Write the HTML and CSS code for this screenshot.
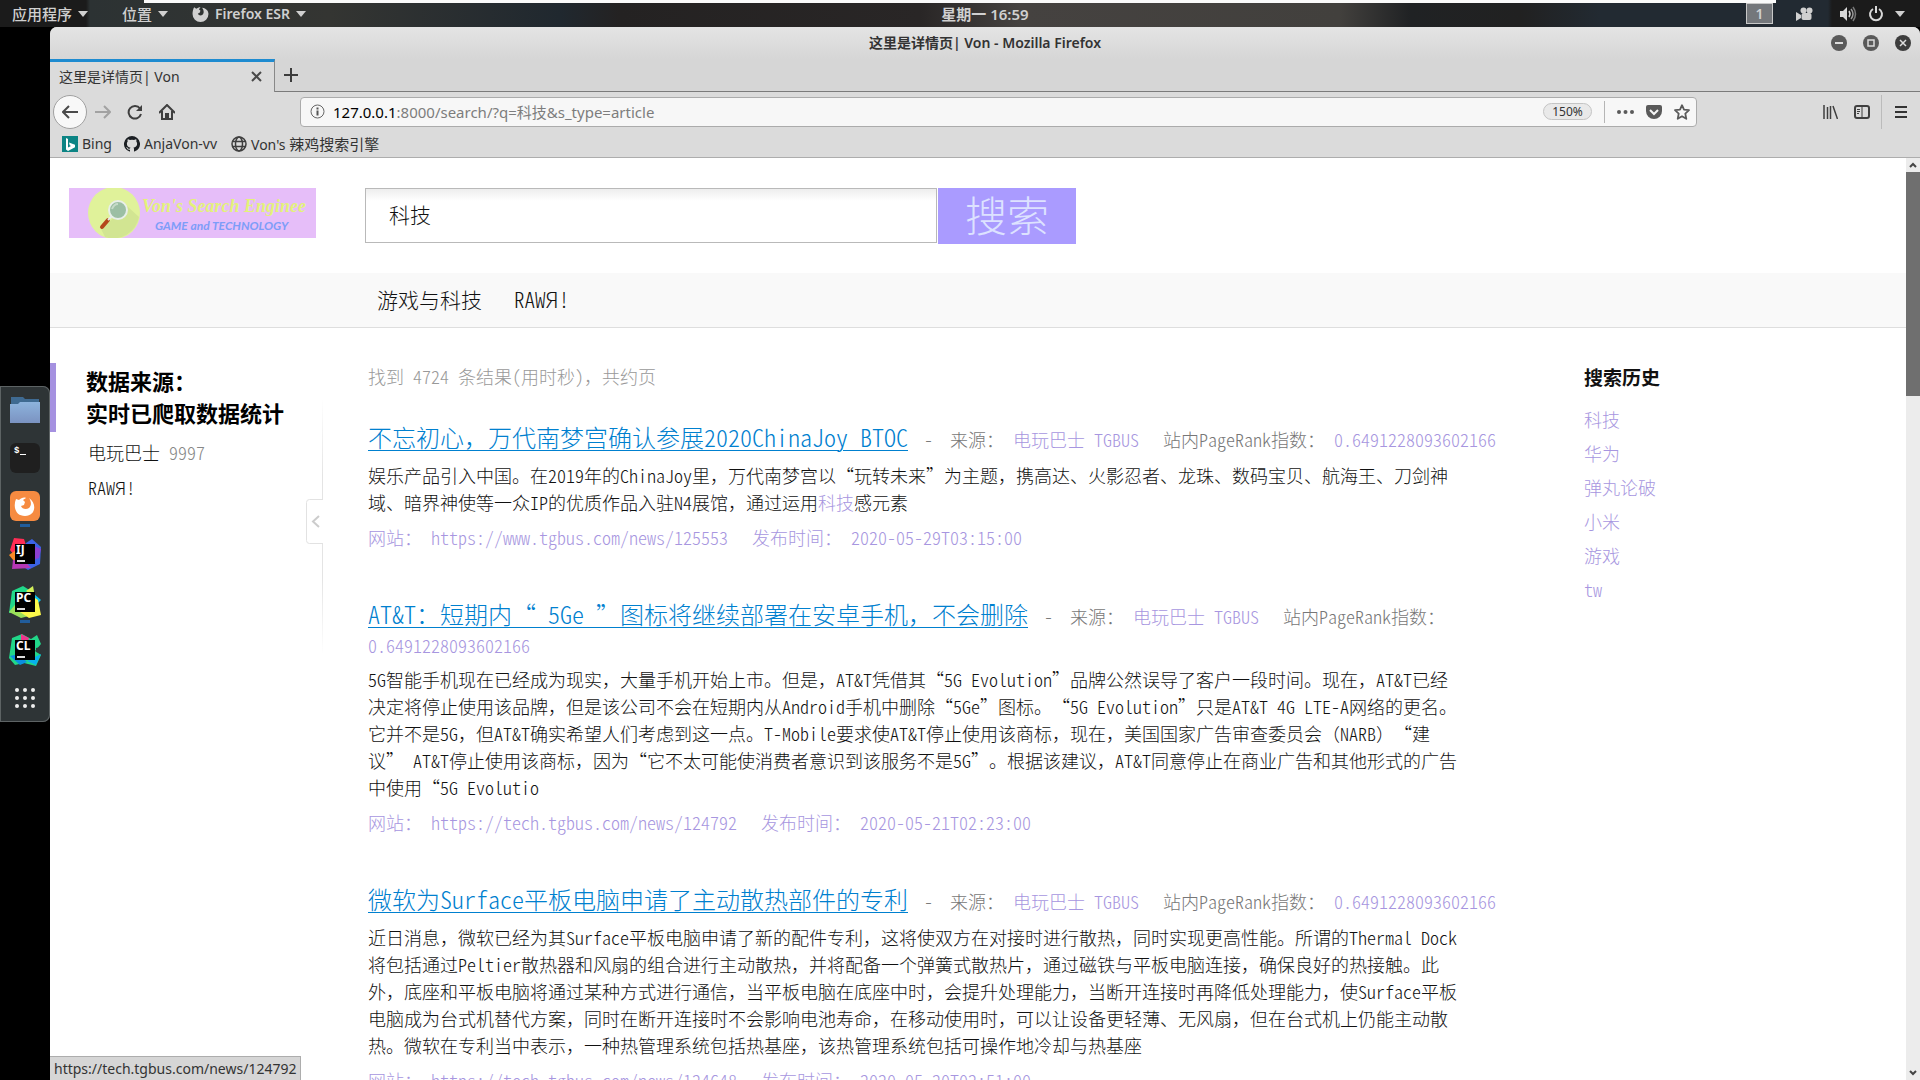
FILE: index.html
```html
<!DOCTYPE html>
<html lang="zh-CN">
<head>
    <meta charset="UTF-8">
    <meta name="viewport" content="width=device-width, initial-scale=1.0">
    <title>这里是详情页| Von</title>
    <link rel="stylesheet" href="styles.css">
</head>
<body>
    <!-- 顶部面板 -->
    <header class="panel">
        <div class="panel-left">
            <button class="menu menu-app">应用程序<i class="caret"></i></button>
            <button class="menu menu-place">位置<i class="caret"></i></button>
            <button class="menu menu-firefox">
                <svg width="17" height="17" viewBox="0 0 16 16"><path fill="#d0d0d0" d="M2 2l2 1.500c1-1 2.500-1.500 4-1.500L6.500 4 8 5.500 7 7.500 5.500 8c.5 2 4 2.500 5 .5 1-2 .5-4-1-6 4 .5 6 3 6 6a7.500 7.500 0 0 1-15 0C.5 6 1 4 2 2z"/></svg>
                Firefox ESR<i class="caret"></i>
            </button>
        </div>
        <div class="clock">星期一 16:59</div>
        <div class="panel-right">
            <span class="workspace">1</span>
            <svg class="camera" width="17" height="14" viewBox="0 0 17 14"><g fill="#d0d0d0"><circle cx="7.500" cy="3.500" r="3"/><circle cx="13.500" cy="3.500" r="3"/><rect x="5.500" y="6" width="10" height="7" rx="2"/><path d="M0 5l5 3v3l-5 3z"/></g></svg>
            <svg class="volume" width="17" height="16" viewBox="0 0 17 16"><path fill="#d8d8d8" d="M0 5h3l4-4v14l-4-4H0z"/><g fill="none" stroke-width="1.500"><path stroke="#d8d8d8" d="M9 5q2 3 0 6"/><path stroke="#999" d="M11 3q4 5 0 10"/><path stroke="#777" d="M13 1q5 7 0 14"/></g></svg>
            <svg width="16" height="16" viewBox="0 0 16 16"><path fill="none" stroke="#d8d8d8" stroke-width="2" d="M5 3a6 6 0 1 0 6 0M8 0v7"/></svg>
            <i class="caret"></i>
        </div>
    </header>

    <div class="desktop">
        <!-- 左侧程序栏 -->
        <nav class="dock">
            <div class="dock-box">
                <span class="dock-item">
                    <svg width="30" height="26" viewBox="0 0 30 26"><path fill="#3f6a91" d="M1 0h12l2 2h14v8H1z"/><path fill="url(#fold)" d="M0 7h8l2-2h20v21H0z"/><defs><linearGradient id="fold" x2="0" y2="1"><stop stop-color="#8db3dd"/><stop offset="1" stop-color="#7b93c1"/></linearGradient></defs></svg>
                </span>
                <span class="dock-item">
                    <svg width="30" height="30" viewBox="0 0 30 30"><rect width="30" height="30" rx="6" fill="#1f1f1f"/><text class="term" x="4" y="10">$</text><path stroke="#fff" d="M10 11.500h6"/></svg>
                </span>
                <span class="dock-item running">
                    <svg width="30" height="30" viewBox="0 0 30 30"><rect width="30" height="30" rx="6" fill="#f68b41"/><path fill="#fff" d="M6 8l3 1c2-2 5-3 7-2l-3 2 2 2-1 3-3 1c1 3 5 4 8 2 3-3 2-7 0-10 8 5 7 18-4 18C5 25 3 15 6 8z"/></svg>
                </span>
                <span class="dock-item">
                    <svg width="32" height="32" viewBox="0 0 32 32"><path fill="#ff2d55" d="M5 0l10 1 4 12-11 8-7-9z"/><path fill="#f98a26" d="M0 17l7-5 5 8-7 3z"/><path fill="#3b63e6" d="M17 5l6-4 9 8-1 17-12 6-9-6z"/><path fill="#8b3fd0" d="M25 8l7 3-2 9-6 2z"/><path fill="#b537b5" d="M4 22l12 1 6 7-19 1z"/><rect x="6" y="6" width="20" height="20"/><text class="ide" x="7" y="16">IJ</text><path stroke="#ddd" stroke-width="2" d="M8 23h8"/></svg>
                </span>
                <span class="dock-item running">
                    <svg width="32" height="32" viewBox="0 0 32 32"><path fill="#21d789" d="M3 5l11-5 8 5-6 22-16 0z"/><path fill="#9be05a" d="M0 26l10-12 10 16-8 2z"/><path fill="#d3f05a" d="M17 5l7-5 2 11z"/><path fill="#07c3f2" d="M25 8l7 6-6 6z"/><path fill="#fcf84a" d="M26 12l3 2 3 15-12 3-9-6z"/><rect x="6" y="6" width="20" height="20"/><text class="ide" x="7" y="16">PC</text><path stroke="#ddd" stroke-width="2" d="M8 23h8"/></svg>
                </span>
                <span class="dock-item">
                    <svg width="32" height="32" viewBox="0 0 32 32"><path fill="#21d789" d="M3 4l10-4 9 5 6-4 4 9-6 7 6 4-5 11-12-3-9 2-6-7z"/><path fill="#ed358c" d="M12 0l8 4-2 6-6-2z"/><path fill="#0a8fe0" d="M1 22l9-2 8 8-7 3z"/><path fill="#07b0ee" d="M18 27l14-7-5 11z"/><path fill="#2e3436" d="M27 14l5-1v6l-5-1z"/><rect x="6" y="6" width="20" height="20"/><text class="ide" x="7" y="16">CL</text><path stroke="#ddd" stroke-width="2" d="M8 23h8"/></svg>
                </span>
                <span class="dock-item">
                    <svg width="20" height="20" viewBox="0 0 20 20"><g fill="#eee"><circle cx="2" cy="2" r="2"/><circle cx="10" cy="2" r="2"/><circle cx="18" cy="2" r="2"/><circle cx="2" cy="10" r="2"/><circle cx="10" cy="10" r="2"/><circle cx="18" cy="10" r="2"/><circle cx="2" cy="18" r="2"/><circle cx="10" cy="18" r="2"/><circle cx="18" cy="18" r="2"/></g></svg>
                </span>
            </div>
        </nav>

        <!-- 浏览器窗口 -->
        <div class="window">
            <div class="titlebar">
                <div class="window-title">这里是详情页| Von - Mozilla Firefox</div>
                <div class="window-btns">
                    <button aria-label="最小化"><svg width="16" height="16" viewBox="0 0 16 16"><circle cx="8" cy="8" r="8" fill="#5a5a5a"/><path stroke="#ddd" stroke-width="2" d="M4 8h8"/></svg></button>
                    <button aria-label="最大化"><svg width="16" height="16" viewBox="0 0 16 16"><circle cx="8" cy="8" r="8" fill="#5a5a5a"/><rect x="5" y="5" width="6" height="6" fill="none" stroke="#ddd" stroke-width="1.500"/></svg></button>
                    <button aria-label="关闭"><svg width="16" height="16" viewBox="0 0 16 16"><circle cx="8" cy="8" r="8" fill="#3d3d3d"/><path stroke="#ddd" stroke-width="1.500" d="M5 5l6 6M11 5l-6 6"/></svg></button>
                </div>
            </div>
            <div class="tabs">
                <div class="tab">
                    <span>这里是详情页| Von</span>
                    <button aria-label="关闭标签页"><svg width="11" height="11" viewBox="0 0 11 11"><path stroke="#4a4a4a" stroke-width="2" d="M1 1l9 9M10 1l-9 9"/></svg></button>
                </div>
                <div class="tabs-rest">
                    <button aria-label="新建标签页"><svg width="14" height="14" viewBox="0 0 14 14"><path stroke="#3c3c3c" stroke-width="2" d="M7 0v14M0 7h14"/></svg></button>
                </div>
            </div>
            <div class="toolbar">
                <div class="nav-btns">
                    <button class="back" aria-label="后退"><svg width="16" height="14" viewBox="0 0 16 14"><path fill="none" stroke="#4a4a4a" stroke-width="2" d="M16 7H1M7 1L1 7l6 6"/></svg></button>
                    <button aria-label="前进"><svg width="16" height="14" viewBox="0 0 16 14"><path fill="none" stroke="#a2a2a2" stroke-width="2" d="M0 7h15M9 1l6 6-6 6"/></svg></button>
                    <button aria-label="刷新"><svg width="16" height="16" viewBox="0 0 16 16"><path fill="none" stroke="#3f3f3f" stroke-width="2" d="M13 4.500A6.300 6.300 0 1 0 14 10"/><path fill="#3f3f3f" d="M15 1v6H9z"/></svg></button>
                    <button aria-label="主页"><svg width="16" height="16" viewBox="0 0 16 16"><path fill="none" stroke="#3f3f3f" stroke-width="2" d="M0 9l8-8 8 8M3 7v8h10V7"/><path fill="#3f3f3f" d="M6 9h4v6H6z"/></svg></button>
                </div>
                <div class="urlbar">
                    <svg width="15" height="15" viewBox="0 0 15 15"><circle cx="7.500" cy="7.500" r="6.500" fill="none" stroke="#666"/><path stroke="#555" stroke-width="2" d="M7.500 6.500v5M7.500 3.500v2"/></svg>
                    <div class="url"><b>127.0.0.1</b>:8000/search/?q=科技&amp;s_type=article</div>
                    <button class="zoom">150%</button>
                    <div class="url-icons">
                        <svg width="17" height="4" viewBox="0 0 17 4"><g fill="#5a5a5a"><circle cx="2" cy="2" r="2"/><circle cx="8.500" cy="2" r="2"/><circle cx="15" cy="2" r="2"/></g></svg>
                        <svg width="16" height="14" viewBox="0 0 16 14"><path fill="#5a5a5a" d="M2 0h12q2 0 2 2v4a8 8 0 0 1-16 0V2q0-2 2-2z"/><path fill="none" stroke="#f6f6f6" stroke-width="2" d="M4 5l4 4 4-4"/></svg>
                        <svg width="16" height="16" viewBox="0 0 16 16"><path fill="none" stroke="#5a5a5a" stroke-width="1.800" stroke-linejoin="round" d="M8 1.200l2 4.500 5 .5-3.700 3.400 1 5.200L8 12.300l-4.300 2.500 1-5.200L1 6.200l5-.5z"/></svg>
                    </div>
                </div>
                <div class="tool-icons">
                    <svg width="15" height="14" viewBox="0 0 15 14"><path stroke="#3f3f3f" stroke-width="1.500" d="M1 0v14M4.500 2v12M7.500 1v13M10 1l4.500 13"/></svg>
                    <svg width="16" height="14" viewBox="0 0 16 14"><rect x="1" y="1" width="14" height="12" rx="2" fill="none" stroke="#3f3f3f" stroke-width="2"/><path stroke="#3f3f3f" d="M8 1v12M3 4.500h3M3 6.500h3M3 8.500h2"/></svg>
                </div>
                <button class="hamburger" aria-label="菜单"><svg width="12" height="12" viewBox="0 0 12 12"><path stroke="#333" stroke-width="2" d="M0 1h12M0 6h12M0 11h12"/></svg></button>
            </div>
            <div class="bookmarks">
                <a href="#"><svg width="16" height="16" viewBox="0 0 16 16"><path fill="#0c8484" d="M0 0h16v16H0z"/><path fill="#fff" d="M4 2l2 1v8.500l3-1.500-1.300-.8L7 6.500l6 2.200v2.600L6 15l-2-1.500z"/></svg>Bing</a>
                <a href="#"><svg width="16" height="16" viewBox="0 0 16 16"><path fill="#1b1f23" d="M8 0a8 8 0 0 0-2.500 15.600c.4.100.5-.2.500-.4v-1.500c-2.200.5-2.700-.9-2.700-.9-.4-.9-.9-1.200-.9-1.200-.7-.5.1-.5.1-.5.8.1 1.200.8 1.200.8.7 1.300 1.900.9 2.300.7.100-.5.3-.9.5-1.100-1.800-.2-3.600-.9-3.600-4 0-.9.300-1.600.8-2.100-.1-.2-.4-1 .1-2.100 0 0 .7-.2 2.200.8a7.600 7.600 0 0 1 4 0c1.500-1 2.200-.8 2.200-.8.4 1.100.2 1.900.1 2.100.5.600.8 1.300.8 2.100 0 3.100-1.900 3.800-3.700 4 .3.300.6.800.6 1.500v2.200c0 .2.100.5.500.4A8 8 0 0 0 8 0z"/></svg>AnjaVon-vv</a>
                <a href="#"><svg width="16" height="16" viewBox="0 0 16 16"><g fill="none" stroke="#3f3f3f" stroke-width="1.500"><circle cx="8" cy="8" r="7"/><ellipse cx="8" cy="8" rx="3.500" ry="7"/><path d="M1.500 5.500h13M1.500 10.500h13"/></g></svg><span>Von's <span class="cjk">辣鸡搜索引擎</span></span></a>
            </div>

            <div class="viewport">
                <div class="page">
                    <form class="search">
                        <svg class="logo" width="247" height="50" viewBox="0 0 247 50">
                            <path fill="#e6bef9" d="M0 0h247v50H0z"/>
                            <circle cx="45" cy="25" r="26" fill="#e0f29a"/>
                            <path fill="#d2e592" d="M58 18l12 11a26 26 0 0 1-34 20l-4-8z"/>
                            <path stroke="#b4471b" stroke-width="4" stroke-linecap="round" d="M33 39l6-7"/>
                            <path stroke="#e8efe9" stroke-width="2" d="M39 32l4-4"/>
                            <circle cx="49" cy="22" r="9" fill="#9cbfa4" stroke="#e8efe9" stroke-width="2"/>
                            <path fill="none" stroke="#c6dbc9" stroke-width="2" d="M43 21q2-5 6-5"/>
                            <text class="logo-name" x="73" y="24">Von's Search Enginee</text>
                            <text class="logo-sub" x="86" y="42">GAME and TECHNOLOGY</text>
                        </svg>
                        <input class="search-input" type="text" value="科技" aria-label="搜索">
                        <button class="search-btn" type="button">搜索</button>
                    </form>
                    <nav class="subnav">
                        <a href="#">游戏与科技</a>
                        <a href="#">RAWЯ!</a>
                    </nav>
                    <div class="main">
                        <aside class="side">
                            <h2>数据来源：<br>实时已爬取数据统计</h2>
                            <ul>
                                <li>电玩巴士 <span class="num">9997</span></li>
                                <li>RAWЯ!</li>
                            </ul>
                            <button class="fold" aria-label="收起"><svg width="17" height="256" viewBox="0 0 17 256"><defs><linearGradient id="fade" x2="0" y2="1"><stop stop-color="#e4e4e4" stop-opacity="0"/><stop offset=".3" stop-color="#e4e4e4"/><stop offset=".7" stop-color="#e4e4e4"/><stop offset="1" stop-color="#e4e4e4" stop-opacity="0"/></linearGradient></defs><path fill="url(#fade)" d="M16 0h1v100h-1zM16 145h1v111h-1z"/><path fill="none" stroke="#e2e2e2" d="M17 100.500H3.500q-3 0-3 3v38q0 3 3 3H17"/><path fill="none" stroke="#ccc" stroke-width="2" d="M13 117l-6 5.500 6 5.500"/></svg></button>
                        </aside>
                        <section class="results">
                            <p class="count">找到 4724 条结果(用时秒)，共约页</p>
                            <div class="item">
                                <h3><a href="#">不忘初心，万代南梦宫确认参展2020ChinaJoy BTOC</a><span class="dash">-</span><span class="from">来源： <em>电玩巴士 TGBUS</em></span><span class="rank">站内PageRank指数： <em>0.6491228093602166</em></span></h3>
                                <p class="text">娱乐产品引入中国。在2019年的ChinaJoy里，万代南梦宫以“玩转未来”为主题，携高达、火影忍者、龙珠、数码宝贝、航海王、刀剑神域、暗界神使等一众IP的优质作品入驻N4展馆，通过运用<em>科技</em>感元素</p>
                                <p class="info"><span>网站： https://www.tgbus.com/news/125553</span><span>发布时间： 2020-05-29T03:15:00</span></p>
                            </div>
                            <div class="item">
                                <h3><a href="#">AT&amp;T：短期内“ 5Ge ”图标将继续部署在安卓手机，不会删除</a><span class="dash">-</span><span class="from">来源： <em>电玩巴士 TGBUS</em></span><span class="rank">站内PageRank指数： <em>0.6491228093602166</em></span></h3>
                                <p class="text">5G智能手机现在已经成为现实，大量手机开始上市。但是，AT&amp;T凭借其“5G Evolution”品牌公然误导了客户一段时间。现在，AT&amp;T已经决定将停止使用该品牌，但是该公司不会在短期内从Android手机中删除“5Ge”图标。“5G Evolution”只是AT&amp;T 4G LTE-A网络的更名。它并不是5G，但AT&amp;T确实希望人们考虑到这一点。T-Mobile要求使AT&amp;T停止使用该商标，现在，美国国家广告审查委员会（NARB）“建议” AT&amp;T停止使用该商标，因为“它不太可能使消费者意识到该服务不是5G”。根据该建议，AT&amp;T同意停止在商业广告和其他形式的广告中使用“5G Evolutio</p>
                                <p class="info"><span>网站： https://tech.tgbus.com/news/124792</span><span>发布时间： 2020-05-21T02:23:00</span></p>
                            </div>
                            <div class="item">
                                <h3><a href="#">微软为Surface平板电脑申请了主动散热部件的专利</a><span class="dash">-</span><span class="from">来源： <em>电玩巴士 TGBUS</em></span><span class="rank">站内PageRank指数： <em>0.6491228093602166</em></span></h3>
                                <p class="text">近日消息，微软已经为其Surface平板电脑申请了新的配件专利，这将使双方在对接时进行散热，同时实现更高性能。所谓的Thermal Dock将包括通过Peltier散热器和风扇的组合进行主动散热，并将配备一个弹簧式散热片，通过磁铁与平板电脑连接，确保良好的热接触。此外，底座和平板电脑将通过某种方式进行通信，当平板电脑在底座中时，会提升处理能力，当断开连接时再降低处理能力，使Surface平板电脑成为台式机替代方案，同时在断开连接时不会影响电池寿命，在移动使用时，可以让设备更轻薄、无风扇，但在台式机上仍能主动散热。微软在专利当中表示，一种热管理系统包括热基座，该热管理系统包括可操作地冷却与热基座</p>
                                <p class="info"><span>网站： https://tech.tgbus.com/news/124648</span><span>发布时间： 2020-05-20T02:51:00</span></p>
                            </div>
                        </section>
                        <aside class="history">
                            <h4>搜索历史</h4>
                            <a href="#">科技</a>
                            <a href="#">华为</a>
                            <a href="#">弹丸论破</a>
                            <a href="#">小米</a>
                            <a href="#">游戏</a>
                            <a href="#">tw</a>
                        </aside>
                    </div>
                </div>
                <!-- 滚动条 -->
                <div class="scrollbar">
                    <svg width="14" height="14" viewBox="0 0 14 14"><path fill="none" stroke="#444" stroke-width="2" d="M4 9l3-3 3 3"/></svg>
                    <div class="track"><div class="thumb"></div></div>
                    <svg width="14" height="14" viewBox="0 0 14 14"><path fill="none" stroke="#444" stroke-width="2" d="M4 5l3 3 3-3"/></svg>
                </div>
                <div class="status">https://tech.tgbus.com/news/124792</div>
            </div>
        </div>
    </div>
    <script>
        // 全角标点不参与半角替换
        var nodes = document.querySelectorAll(".subnav a,.side li,.count,.item a,.text");
        for(var i=0;i<nodes.length;i++){
            nodes[i].innerHTML = nodes[i].innerHTML.replace(/[，（）Я]/g,'<span class="full">$&</span>');
        }
    </script>
</body>
</html>
```
FILE: styles.css
```css
*{
    padding: 0;
    margin: 0;
    box-sizing: border-box;
}
body{
    height: 100vh;
    display: flex;
    flex-direction: column;
    overflow: hidden;
    background-color: #000;
    font-family: "Noto Sans", "Noto Sans CJK SC", sans-serif;
    font-size: 14px;
}
button{
    border: 0;
    background: none;
    font: inherit;
    color: inherit;
}
svg{
    display: block;
    flex: none;
}
a{
    color: inherit;
    text-decoration: none;
}
em{
    font-style: normal;
    color: #a796e0;
}
ul{
    list-style: none;
}

/* 顶部面板 */
.panel{
    position: relative;
    height: 27px;
    flex: none;
    display: grid;
    grid-template-columns: 1fr auto 1fr;
    align-items: center;
    font-weight: 600;
    line-height: 20px;
    color: #d0d0d0;
    background: linear-gradient(90deg, #1b1b1b 0, #1b1b1b 86px, #2c3233 90px, #343532 330px, #20282f 560px, #242222 620px, #292626 920px, #454240 1020px, #42403d 1340px, #202224 1410px, #212121 1520px, #222a32 1600px, #222a32 1828px, #1b1b1b 1832px);
}
.panel::before{
    content: '';
    position: absolute;
    top: 0;
    left: 144px;
    right: 144px;
    height: 3px;
    background-color: #fafafa;
}
.panel-left,.panel-right,.menu{
    display: flex;
    align-items: center;
}
.panel-left{
    padding-left: 12px;
}
.menu{
    gap: 6px;
    font-size: 15px;
    font-weight: 500;
}
.menu-app{
    margin-right: 34px;
}
.menu-place{
    margin-right: 24px;
}
.menu-firefox{
    font-size: 14px;
    font-weight: 600;
}
.caret{
    border: 5px solid transparent;
    border-top: 6px solid #d0d0d0;
    border-bottom: 0;
}
.clock{
    margin-left: 50px;
    font-size: 15px;
}
.panel-right{
    justify-content: flex-end;
    padding-right: 15px;
    gap: 11px;
}
.workspace{
    width: 27px;
    height: 21px;
    line-height: 19px;
    border: 1px solid #c8c8c8;
    background-color: #74777b;
    text-align: center;
}
.camera{
    margin-left: 12px;
}
.volume{
    margin-left: 16px;
}

/* 程序栏 */
.desktop{
    flex: 1;
    min-height: 0;
    display: flex;
}
.dock{
    width: 50px;
    flex: none;
    display: flex;
    flex-direction: column;
    justify-content: center;
}
.dock-box{
    background-color: #2e3436;
    border-radius: 0 7px 7px 0;
    box-shadow: inset 0 0 0 1px #5d6364;
}
.dock-item{
    position: relative;
    height: 48px;
    display: flex;
    justify-content: center;
    align-items: center;
}
.running::after{
    content: '';
    position: absolute;
    bottom: 3px;
    width: 10px;
    height: 3px;
    background-color: #215d9c;
}
.ide,.term{
    fill: #fff;
    font-size: 12px;
    font-weight: bold;
}
.term{
    font-family: "Liberation Mono", monospace;
    font-size: 9px;
}

/* 浏览器 */
.window{
    flex: 1;
    min-width: 0;
    display: flex;
    flex-direction: column;
    border-radius: 7px 7px 0 0;
    overflow: hidden;
    background-color: #dbdbdb;
    color: #333;
}
.titlebar{
    height: 32px;
    display: grid;
    grid-template-columns: 1fr auto 1fr;
    align-items: center;
    background: linear-gradient(#e4e4e4, #d6d6d6);
}
.window-title{
    grid-column: 2;
    padding-bottom: 2px;
    font-weight: 600;
}
.window-btns{
    display: flex;
    justify-content: flex-end;
    gap: 16px;
    padding-right: 9px;
}
.tabs{
    height: 33px;
    display: flex;
    background-color: #d6d6d6;
}
.tab{
    width: 225px;
    padding: 0 12px 2px 9px;
    display: flex;
    justify-content: space-between;
    align-items: center;
    border-top: 3px solid #1e8bd0;
    border-right: 1px solid #888;
    background-color: #dbdbdb;
}
.tabs-rest{
    flex: 1;
    display: flex;
    align-items: center;
    padding-left: 9px;
    border-bottom: 1px solid #7b7b7b;
}
.toolbar{
    height: 39px;
    display: flex;
    align-items: center;
}
.nav-btns{
    width: 250px;
    padding-left: 3px;
    display: flex;
    align-items: center;
    gap: 16px;
}
.nav-btns .back{
    width: 34px;
    height: 34px;
    margin-right: -8px;
    display: flex;
    justify-content: center;
    align-items: center;
    border: 1px solid #a0a0a0;
    border-radius: 50%;
    background-color: #f8f8f8;
}
.urlbar{
    flex: 1;
    max-width: 1397px;
    height: 30px;
    padding: 0 6px 0 9px;
    display: flex;
    align-items: center;
    border: 1px solid #ababab;
    border-radius: 4px;
    background-color: #f7f7f7;
}
.url{
    flex: 1;
    padding-left: 8px;
    font-size: 15px;
    color: #7d7d7d;
}
.url b{
    font-weight: normal;
    color: #000;
}
.zoom{
    width: 49px;
    height: 17px;
    line-height: 15px;
    border: 1px solid #c4c4c4;
    border-radius: 9px;
    background-color: #e9e9e9;
    font-size: 12px;
}
.url-icons{
    height: 22px;
    margin-left: 12px;
    padding-left: 12px;
    display: flex;
    align-items: center;
    gap: 12px;
    border-left: 1px solid #b5b5b5;
}
.tool-icons{
    margin-left: auto;
    display: flex;
    gap: 16px;
}
.hamburger{
    height: 34px;
    margin-left: 11px;
    padding: 0 13px;
    border-left: 1px solid #bbb;
}
.bookmarks{
    height: 27px;
    padding: 0 12px 1px;
    display: flex;
    align-items: center;
    gap: 12px;
    border-bottom: 1px solid #adadad;
}
.bookmarks a{
    display: flex;
    align-items: center;
    gap: 4px;
}
.bookmarks a:nth-child(2){
    margin-right: 2px;
}
.cjk{
    font-size: 15px;
}

/* 页面 */
.viewport{
    position: relative;
    flex: 1;
    min-height: 0;
    display: flex;
    background-color: #fff;
}
.page{
    flex: 1;
    min-width: 0;
    overflow: hidden;
    font-family: "Noto Sans CJK SC", sans-serif;
    font-size: 18px;
    font-weight: 300;
    line-height: 27px;
    /* 西文用半角字形 */
    font-feature-settings: "hwid";
    text-spacing-trim: space-all;
    color: #111;
}
.full{
    font-feature-settings: "fwid";
}
.search{
    padding: 30px 19px 29px;
    display: flex;
}
.logo-name{
    font-family: "Liberation Serif", serif;
    font-size: 18px;
    font-weight: bold;
    font-style: italic;
    font-feature-settings: normal;
    fill: #e3f27a;
}
.logo-sub{
    font-family: Lato, sans-serif;
    font-size: 12px;
    font-weight: bold;
    font-style: italic;
    font-feature-settings: normal;
    fill: #7d9df8;
}
.search-input{
    width: 572px;
    height: 55px;
    margin-left: 49px;
    padding: 0 23px 3px;
    border: 1px solid #b9b9b9;
    background: linear-gradient(#ededed, #fff 12px);
    font: inherit;
    font-size: 21px;
    color: #111;
}
.search-btn{
    width: 138px;
    height: 56px;
    padding-bottom: 4px;
    margin-left: 1px;
    background-color: #aa9bff;
    font-size: 42px;
    line-height: 52px;
    color: #dde2ff;
}
.subnav{
    height: 55px;
    padding: 0 0 2px 327px;
    display: flex;
    align-items: center;
    gap: 32px;
    border-bottom: 1px solid #dedede;
    background-color: #f9f9f9;
    font-size: 21px;
}
.main{
    display: flex;
    padding-top: 35px;
}
.side{
    position: relative;
    width: 318px;
    flex: none;
}
.side h2{
    padding: 1px 0 4px 30px;
    border-left: 6px solid #a591e0;
    font-size: 22px;
    line-height: 32px;
    color: #000;
}
.side ul{
    padding: 3px 0 0 38px;
    line-height: 35px;
}
.num{
    color: #888;
}
.fold{
    position: absolute;
    top: 36px;
    right: 45px;
}
.results{
    width: 1168px;
}
.count{
    margin-bottom: 29px;
    color: #999;
}
.item{
    margin-bottom: 45px;
}
.item h3{
    font-size: 18px;
    font-weight: 300;
    color: #777;
}
.item h3 a{
    font-size: 24px;
    line-height: 36px;
    color: #0080cf;
    text-decoration: underline;
    text-decoration-thickness: 1px;
    text-underline-offset: 3px;
}
.dash{
    margin: 0 17px 0 16px;
}
.rank{
    margin-left: 24px;
}
.text{
    max-width: 1094px;
    margin: 7px 0 8px;
}
.info{
    display: flex;
    gap: 24px;
    color: #a796e0;
}
.history{
    flex: 1;
    padding-left: 48px;
    display: flex;
    flex-direction: column;
    line-height: 34px;
    color: #a796e0;
}
.history h4{
    margin-bottom: 12px;
    font-size: 19px;
    line-height: 27px;
    color: #111;
}
.scrollbar{
    width: 14px;
    display: flex;
    flex-direction: column;
    background-color: #ececec;
}
.track{
    flex: 1;
}
.thumb{
    height: 25%;
    background-color: #6f6f6f;
}
.status{
    position: absolute;
    left: 0;
    bottom: 0;
    height: 24px;
    padding: 0 4px;
    line-height: 23px;
    border: 1px solid #adadad;
    border-width: 1px 1px 0 0;
    background-color: #d6d6d6;
}
```
